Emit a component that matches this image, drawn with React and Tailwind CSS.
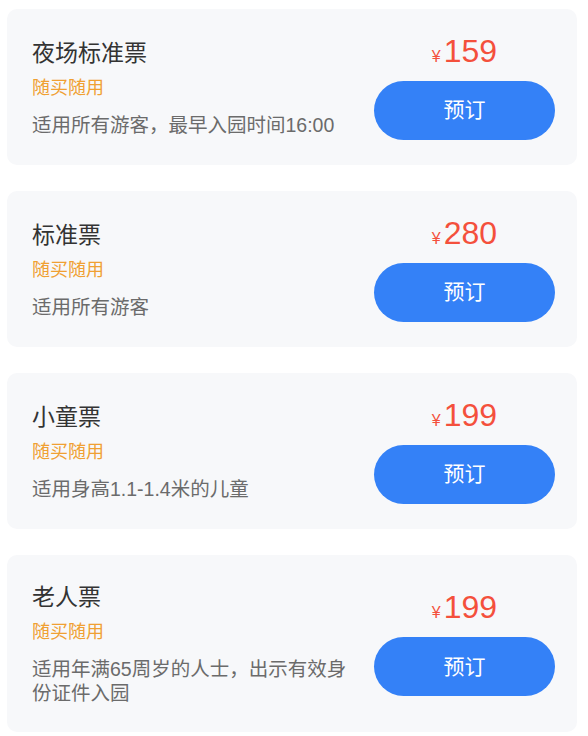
import React from 'react'

const tickets = [
  { id: 1, name: '夜场标准票', tag: '随买随用', desc: '适用所有游客，最早入园时间16:00', price: 159 },
  { id: 2, name: '标准票', tag: '随买随用', desc: '适用所有游客', price: 280 },
  { id: 3, name: '小童票', tag: '随买随用', desc: '适用身高1.1-1.4米的儿童', price: 199 },
  { id: 4, name: '老人票', tag: '随买随用', desc: '适用年满65周岁的人士，出示有效身份证件入园', price: 199 },
]

function TicketCard({ ticket }) {
  return (
    <div className="flex items-center min-h-[156px] rounded-[10px] bg-[#f7f8fa] pl-[25px] pr-[22px] py-[25px]">
      <div className="flex-1 min-w-0 py-[2px]">
        <div className="text-[23px] leading-[30px] text-[#333]">{ticket.name}</div>
        <div className="mt-[8px] text-[18px] leading-[24px] text-[#f0a032]">{ticket.tag}</div>
        <div className="mt-[13px] text-[19.5px] leading-[24px] text-[#6b6b6b]">{ticket.desc}</div>
      </div>
      <div className="ml-[18px] w-[181px] flex flex-col items-center">
        <div className="h-[30px] flex items-baseline text-[#f4503c] leading-none">
          <span className="text-[16px] mr-[3px]">¥</span>
          <span className="text-[32px]">{ticket.price}</span>
        </div>
        <button className="mt-[16px] w-full h-[59px] rounded-full bg-[#3481f7] text-white text-[21px]">
          预订
        </button>
      </div>
    </div>
  )
}

export default function App() {
  return (
    <div
      className="min-h-screen bg-white pl-[7px] pr-[11px] pt-[9px] pb-[6px] flex flex-col gap-[26px]"
      style={{ fontFamily: '"Liberation Sans", "Noto Sans CJK SC", sans-serif' }}
    >
      {tickets.map(t => (
        <TicketCard key={t.id} ticket={t} />
      ))}
    </div>
  )
}
